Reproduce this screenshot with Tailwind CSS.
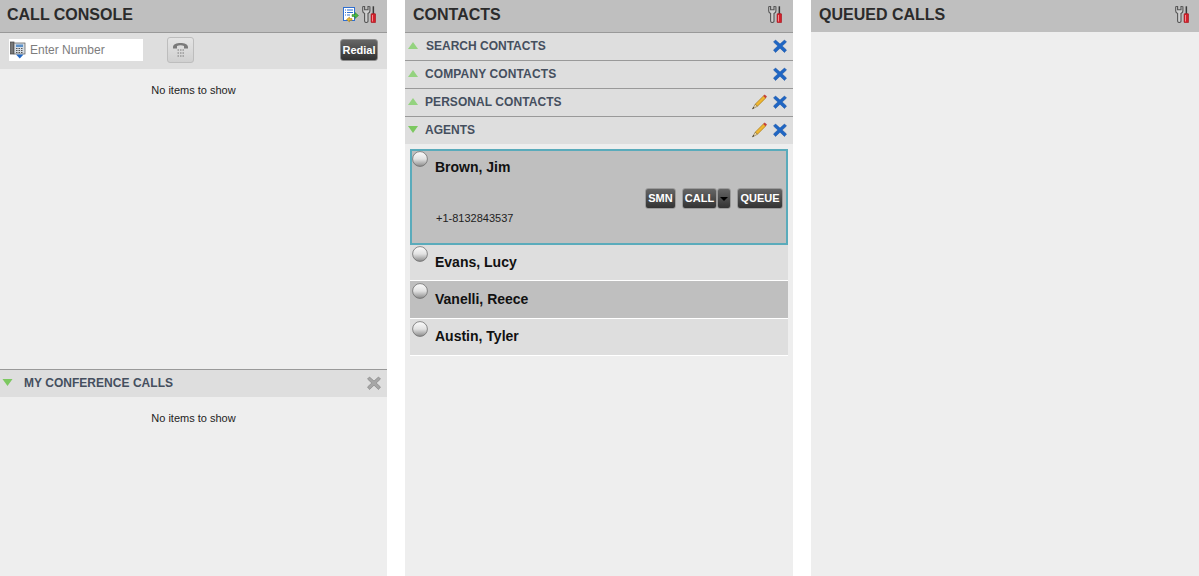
<!DOCTYPE html>
<html lang="en">
<head>
  <meta charset="UTF-8">
  <title>Call Console</title>
  <script src="https://cdn.jsdelivr.net/npm/@tailwindcss/browser@4"></script>
</head>
<body class="bg-white h-[576px] overflow-hidden font-['Liberation_Sans',Arial,sans-serif]">
  <!-- shared icons (not display:none, the radio gradient needs to stay live) -->
  <svg class="absolute w-0 h-0">
    <defs>
      <linearGradient id="radio-fill" x1="0" y1="0" x2="0" y2="1">
        <stop offset="0" stop-color="#fcfcfc"/>
        <stop offset=".5" stop-color="#e2e2e2"/>
        <stop offset="1" stop-color="#8a8a8a"/>
      </linearGradient>
    </defs>
    <symbol id="tools" viewBox="0 0 14 17">
      <path d="M.7 .8 V5 C.7 6.2 1.6 7 2.6 7.4 V15 C2.6 17 6 17 6 15 V7.4 C7 7 7.9 6.2 7.9 5 V.8 L6 .3 V3.8 H2.6 V.3 Z" fill="#cfcfcf" stroke="#555555" stroke-width="1.1"/>
      <rect x="10.6" y=".3" width="1.5" height="7.5" fill="#3a3a3a"/>
      <rect x="9" y="7.6" width="4.7" height="9.2" rx="1" fill="#d3202b" stroke="#8c1018" stroke-width=".5"/>
      <rect x="10" y="9" width="1" height="6.5" fill="#f08a8f"/>
    </symbol>
    <symbol id="blue-x" viewBox="0 0 14 14">
      <path d="M2.5 1 L7 5 L11.5 1 L13.5 3 L9.2 7 L13.5 11 L11.5 13.5 L7 9.2 L2.5 13.5 L.5 11 L4.8 7 L.5 3 Z" fill="#1f66c4" stroke="#174f9e" stroke-width=".5"/>
    </symbol>
    <symbol id="pencil" viewBox="0 0 16 16">
      <path d="M4 10.5 L12 2.5 L14 4.5 L6 12.5 Z" fill="#f0b72f" stroke="#a87a14" stroke-width=".7"/>
      <path d="M11.6 2.9 L12.8 1.4 L15 3.4 L13.6 4.9 Z" fill="#c4403c"/>
      <path d="M4 10.5 L6 12.5 L1.3 15 Z" fill="#efd9a9" stroke="#6b5a30" stroke-width=".5"/>
      <path d="M1.3 15 L2.2 13.2 L3 14 Z" fill="#222"/>
    </symbol>
    <symbol id="tri-up" viewBox="0 0 10 7"><path d="M5 0 L10 7 H0 Z" fill="#94d37f"/></symbol>
    <symbol id="tri-down" viewBox="0 0 10 7"><path d="M0 0 H10 L5 7 Z" fill="#7cc860"/></symbol>
    <symbol id="radio" viewBox="0 0 16 16">
      <circle cx="8" cy="8" r="7.4" fill="url(#radio-fill)" stroke="#6e6e6e" stroke-width=".8"/>
    </symbol>
  </svg>

  <div class="grid grid-cols-[387px_388px_388px] gap-x-[18px] h-[576px]">

    <!-- Call console -->
    <section class="bg-[#eeeeee] flex flex-col h-[576px]">
      <header class="h-[33px] bg-[#bfbfbf] border-b border-[#999999] flex items-center justify-between pl-[7px] pr-[11px] pb-[3px]">
        <h1 class="text-[16px] font-bold text-[#2b2b2b]">CALL CONSOLE</h1>
        <div class="flex items-center gap-[3px]">
          <svg class="w-[16px] h-[16px]" viewBox="0 0 16 16">
            <rect x=".5" y=".5" width="11" height="13" fill="#fff" stroke="#2f6fd0"/>
            <path d="M2 3h1M4 3h6M2 5.5h1M4 5.5h6M2 8h1M4 8h3" stroke="#2f6fd0" stroke-width="1.2"/>
            <path d="M9 7.5h3V5.5l3.5 3-3.5 3V9.5H9Z" fill="#49b840" stroke="#2a7d24" stroke-width=".5"/>
            <path d="M9 11.5H6.5V10L3.5 12.5 6.5 15v-1.5H9Z" fill="#eeb92f" stroke="#a47b14" stroke-width=".5"/>
          </svg>
          <svg class="w-[14px] h-[17px]"><use href="#tools"/></svg>
        </div>
      </header>
      <div class="h-[36px] bg-[#dedede] flex items-center pl-[9px] pr-[9px] pb-[2px]">
        <div class="w-[134px] h-[22px] bg-white flex items-center pl-[1px]">
          <svg class="w-[16px] h-[18px] shrink-0" viewBox="0 0 16 18">
            <rect x=".5" y="1" width="3.5" height="12" fill="#777" stroke="#444" stroke-width=".7"/>
            <rect x="4" y="2" width="11" height="11" fill="#d6dde4" stroke="#555" stroke-width=".7"/>
            <rect x="6" y="3.5" width="7" height="2.5" fill="#5a8fc8"/>
            <path d="M6 7.5h1.5M8.5 7.5H10M11 7.5h1.5M6 9.5h1.5M8.5 9.5H10M11 9.5h1.5M6 11.5h1.5M8.5 11.5H10M11 11.5h1.5" stroke="#555"/>
            <path d="M6 13.5h7.5l-3.75 4Z" fill="#1f66c4"/>
          </svg>
          <span class="ml-[4px] text-[12px] text-[#7d7d7d]">Enter Number</span>
        </div>
        <button class="ml-[24px] w-[27px] h-[26px] rounded-[3px] border border-[#bdbdbd] bg-gradient-to-b from-[#e4e4e4] to-[#d0d0d0] flex items-center justify-center">
          <svg class="w-[17px] h-[18px]" viewBox="0 0 17 18">
            <path d="M1 6 C1 .5 16 .5 16 6 V7.5 H12 V5 C10 4 7 4 5 5 V7.5 H1 Z" fill="#7a7a7a"/>
            <path d="M5.5 9h1.5M8 9h1.5M10.5 9H12M5.5 12h1.5M8 12h1.5M10.5 12H12M5.5 15h1.5M8 15h1.5M10.5 15H12" stroke="#7a7a7a" stroke-width="1.2"/>
          </svg>
        </button>
        <button class="ml-auto w-[38px] h-[22px] rounded-[3px] border border-[#8d8d8d] bg-gradient-to-b from-[#666666] to-[#333333] text-white text-[11px] font-bold">Redial</button>
      </div>
      <div class="h-[300px] pt-[15px] text-center text-[11px] leading-[13px] text-[#222222]">No items to show</div>
      <div class="h-[28px] bg-[#dedede] border-t border-[#999999] flex items-center pl-[2px] pr-[6px] pb-[2px]">
        <svg class="w-[11px] h-[7px]"><use href="#tri-down"/></svg>
        <span class="ml-[11px] text-[12px] font-bold text-[#454f5e] tracking-[0.03px]">MY CONFERENCE CALLS</span>
        <svg class="ml-auto w-[14px] h-[14px]" viewBox="0 0 14 14"><path d="M2.5 1 L7 5 L11.5 1 L13.5 3 L9.2 7 L13.5 11 L11.5 13.5 L7 9.2 L2.5 13.5 L.5 11 L4.8 7 L.5 3 Z" fill="#a6a6a6" stroke="#7e7e7e" stroke-width=".6"/></svg>
      </div>
      <div class="pt-[15px] text-center text-[11px] leading-[13px] text-[#222222]">No items to show</div>
    </section>

    <!-- Contacts -->
    <section class="bg-[#eeeeee] flex flex-col h-[576px]">
      <header class="h-[33px] bg-[#bfbfbf] border-b border-[#999999] flex items-center justify-between pl-[8px] pr-[11px] pb-[3px]">
        <h1 class="text-[16px] font-bold text-[#2b2b2b]">CONTACTS</h1>
        <svg class="w-[14px] h-[17px]"><use href="#tools"/></svg>
      </header>

      <div class="h-[28px] bg-[#dedede] border-b border-[#999999] flex items-center pl-[3px] pr-[6px] pb-[2px]">
        <svg class="w-[10px] h-[7px]"><use href="#tri-up"/></svg>
        <span class="ml-[8px] text-[12px] font-bold text-[#454f5e]">SEARCH CONTACTS</span>
        <svg class="ml-auto w-[14px] h-[14px]"><use href="#blue-x"/></svg>
      </div>
      <div class="h-[28px] bg-[#dedede] border-b border-[#999999] flex items-center pl-[3px] pr-[6px] pb-[2px]">
        <svg class="w-[10px] h-[7px]"><use href="#tri-up"/></svg>
        <span class="ml-[7px] text-[12px] font-bold text-[#454f5e] tracking-[0.12px]">COMPANY CONTACTS</span>
        <svg class="ml-auto w-[14px] h-[14px]"><use href="#blue-x"/></svg>
      </div>
      <div class="h-[28px] bg-[#dedede] border-b border-[#999999] flex items-center pl-[3px] pr-[6px] pb-[2px]">
        <svg class="w-[10px] h-[7px]"><use href="#tri-up"/></svg>
        <span class="ml-[7px] text-[12px] font-bold text-[#454f5e] tracking-[0.06px]">PERSONAL CONTACTS</span>
        <svg class="ml-auto w-[17px] h-[17px]"><use href="#pencil"/></svg>
        <svg class="ml-[5px] w-[14px] h-[14px]"><use href="#blue-x"/></svg>
      </div>
      <div class="h-[27px] bg-[#dedede] flex items-center pl-[3px] pr-[6px] pb-[2px]">
        <svg class="w-[10px] h-[7px]"><use href="#tri-down"/></svg>
        <span class="ml-[7px] text-[12px] font-bold text-[#454f5e]">AGENTS</span>
        <svg class="ml-auto w-[17px] h-[17px]"><use href="#pencil"/></svg>
        <svg class="ml-[5px] w-[14px] h-[14px]"><use href="#blue-x"/></svg>
      </div>

      <ul class="pt-[5px] px-[5px]">
        <li class="h-[96px] bg-[#bfbfbf] border-2 border-[#5aabbb] pr-[3px]">
          <div class="flex items-start">
            <svg class="w-[16px] h-[16px] shrink-0"><use href="#radio"/></svg>
            <span class="ml-[7px] mt-[8px] text-[14px] leading-[16px] font-bold text-[#111111]">Brown, Jim</span>
          </div>
          <div class="mt-[13px] flex justify-end">
            <button class="w-[31px] h-[21px] rounded-[3px] border border-[#9a9a9a] bg-gradient-to-b from-[#666666] to-[#333333] text-white text-[11px] font-bold">SMN</button>
            <button class="ml-[6px] w-[35px] h-[21px] rounded-[3px] border border-[#9a9a9a] bg-gradient-to-b from-[#666666] to-[#333333] text-white text-[11px] font-bold">CALL</button>
            <button class="w-[14px] h-[21px] rounded-[3px] border border-[#9a9a9a] bg-gradient-to-b from-[#666666] to-[#333333] flex items-center justify-center">
              <svg class="w-[8px] h-[4px]" viewBox="0 0 8 4"><path d="M0 0H8L4 4Z" fill="#000"/></svg>
            </button>
            <button class="ml-[6px] w-[46px] h-[21px] rounded-[3px] border border-[#9a9a9a] bg-gradient-to-b from-[#666666] to-[#333333] text-white text-[11px] font-bold">QUEUE</button>
          </div>
          <p class="ml-[24px] mt-[3px] text-[11px] leading-[13px] text-[#222222]">+1-8132843537</p>
        </li>
        <li class="h-[36px] bg-[#dedede] border-b border-white pl-[2px] flex items-start">
          <svg class="mt-[1px] w-[16px] h-[16px] shrink-0"><use href="#radio"/></svg>
          <span class="ml-[7px] mt-[9px] text-[14px] leading-[16px] font-bold text-[#111111]">Evans, Lucy</span>
        </li>
        <li class="h-[38px] bg-[#bfbfbf] border-b border-white pl-[2px] flex items-start">
          <svg class="mt-[2px] w-[16px] h-[16px] shrink-0"><use href="#radio"/></svg>
          <span class="ml-[7px] mt-[10px] text-[14px] leading-[16px] font-bold text-[#111111]">Vanelli, Reece</span>
        </li>
        <li class="h-[37px] bg-[#dedede] border-b border-white pl-[2px] flex items-start">
          <svg class="mt-[2px] w-[16px] h-[16px] shrink-0"><use href="#radio"/></svg>
          <span class="ml-[7px] mt-[9px] text-[14px] leading-[16px] font-bold text-[#111111]">Austin, Tyler</span>
        </li>
      </ul>
    </section>

    <!-- Queued calls -->
    <section class="bg-[#eeeeee] h-[576px]">
      <header class="h-[32px] bg-[#bfbfbf] flex items-center justify-between pl-[8px] pr-[10px] pb-[3px]">
        <h1 class="text-[16px] font-bold text-[#2b2b2b]">QUEUED CALLS</h1>
        <svg class="w-[14px] h-[17px]"><use href="#tools"/></svg>
      </header>
    </section>
  </div>
</body>
</html>
